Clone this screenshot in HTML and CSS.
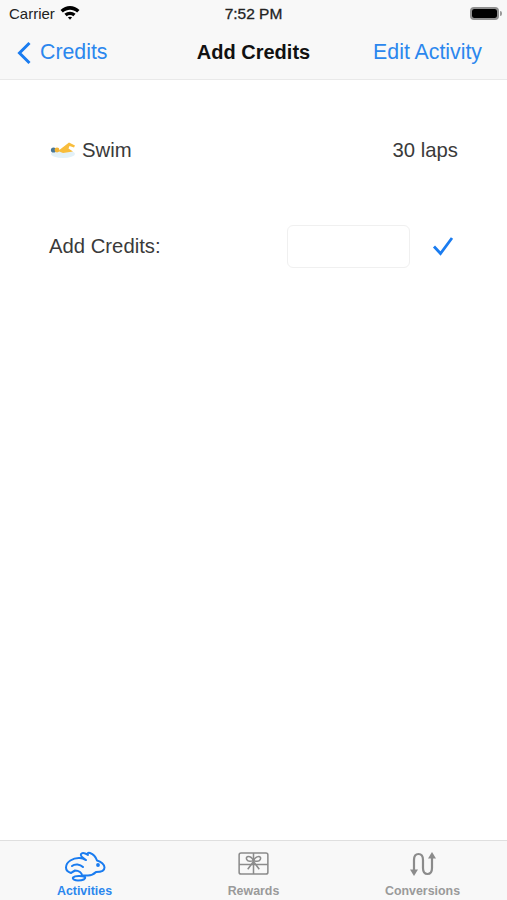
FILE: index.html
```html
<!DOCTYPE html>
<html>
<head>
<meta charset="utf-8" />
<title>Add Credits</title>
<link rel="stylesheet" href="styles.css">
</head>
<body>
<div class="app">
	<div class="top">
		<div class="status">
			<div class="status-left">
				<span>Carrier</span>
				<svg class="wifi" width="20" height="15" viewBox="0 0 19 14">
					<path d="M.5 4.600C6 -.4 13 -.4 18.500 4.600L16.300 7C12 3.400 7 3.400 2.700 7Z" fill="#000"/>
					<path d="M4.200 8.300C7.400 5.700 11.600 5.700 14.800 8.300L12.700 10.500C10.800 9 8.200 9 6.300 10.500Z" fill="#000"/>
					<path d="M7.500 11.600C8.700 10.700 10.300 10.700 11.500 11.600L9.500 13.900Z" fill="#000"/>
				</svg>
			</div>
			<span class="clock">7:52 PM</span>
			<div class="battery"><i></i></div>
		</div>
		<div class="nav">
			<a class="back" href="javascript:;">
				<svg width="16" height="24" viewBox="0 0 16 24"><path d="M13.500 2 3.500 12l10 10" fill="none" stroke="#1a7cf0" stroke-width="3"/></svg>
				Credits
			</a>
			<h1>Add Credits</h1>
			<a class="edit" href="javascript:;">Edit Activity</a>
		</div>
	</div>
	<div class="content">
		<div class="row row-swim">
			<div class="swim">
				<svg width="28" height="20" viewBox="0 0 28 20">
					<ellipse cx="14" cy="14" rx="12" ry="4" fill="#e3f1f8"/>
					<path d="M9 11 15.500 6 20 2.500 26 5.500 25 7.500 20.500 6 19.500 8.500 24 11.500 14 13Z" fill="#f8bd3c"/>
					<circle cx="4.500" cy="10" r="2.600" fill="#4a7796"/>
					<circle cx="8" cy="10" r="2.400" fill="#f4b636"/>
				</svg>
				<span>Swim</span>
			</div>
			<span>30 laps</span>
		</div>
		<div class="row row-add">
			<label>Add Credits:</label>
			<div class="entry">
				<div class="field"></div>
				<svg width="22" height="20" viewBox="0 0 22 20"><path d="M2 10.500 8.500 17.500 20 2" fill="none" stroke="#1a7cf0" stroke-width="2.800"/></svg>
			</div>
		</div>
	</div>
	<div class="tabs">
		<a class="tab on" href="javascript:;">
			<svg class="ico-rabbit" width="44" height="32" viewBox="0 0 44 32" fill="none" stroke="#1a7cf0" stroke-width="2" stroke-linejoin="round" stroke-linecap="round">
				<path d="M3 17.500C3 12 10 7.500 17 8C19 8.200 21 9 23 10C20 8 17 5.500 18 4C19 2.500 22 3 25 5C23.500 3.500 25 2.500 27 3C30 4 33 7.500 34 10.500C38 11.500 41.500 14.500 41.500 17.500C41.500 20.500 38 22 33 22C31 24 28 25.500 25 25.500L19 25.500C19 23 16 20.500 12 20.500C10 21.500 9 22.500 8 23C5 22 3 20 3 17.500Z"/>
				<path d="M10 27.500C12 25.500 19 25.500 22 27C23 29 20 30.500 15 30.500C12 30.500 9 29 10 27.500Z"/>
				<path d="M9 16C12 13.500 17 14 20 17"/>
				<circle cx="35" cy="15" r=".9" fill="#1a7cf0"/>
			</svg>
			<span>Activities</span>
		</a>
		<a class="tab" href="javascript:;">
			<svg class="ico-gift" width="31" height="23" viewBox="0 0 32 24" fill="none" stroke="#8b8b8b" stroke-width="1.600">
				<rect x="1" y="1" width="30" height="22" rx="2"/>
				<path d="M1 13H31M16 1V23"/>
				<path d="M16 9C13 3 7 4 9 8C10 10 13 10 16 9C19 10 22 10 23 8C25 4 19 3 16 9Z"/>
				<path d="M16 10 10 18M16 10 22 18"/>
			</svg>
			<span>Rewards</span>
		</a>
		<a class="tab" href="javascript:;">
			<svg class="ico-swap" width="28" height="26" viewBox="0 0 28 26" fill="none" stroke="#8b8b8b" stroke-width="2.200">
				<path d="M5 20V9C5 5 7 3 9.500 3S14 5 14 9V17C14 21 16 23 18.500 23S23 21 23 17V5"/>
				<path d="M1 18.500H9L5 25Z" fill="#8b8b8b" stroke="none"/>
				<path d="M19 7.500H27L23 1Z" fill="#8b8b8b" stroke="none"/>
			</svg>
			<span>Conversions</span>
		</a>
	</div>
</div>
</body>
</html>
```

FILE: styles.css
```css
*{ margin:0; padding:0; box-sizing:border-box; text-decoration:none;}
body{ background:#fff; font-family:"Liberation Sans", Arial, sans-serif; color:#3a3a3a;}
.app{ width:507px; height:900px; display:flex; flex-direction:column; overflow:hidden;}

.top{ height:80px; background:#f8f8f8; border-bottom:1px solid #e9e9e9;}
.status{ height:28px; padding:0 9px; display:flex; align-items:center; justify-content:space-between; position:relative; font-size:15px; color:#222;}
.status-left{ display:flex; align-items:center; gap:5px; margin-top:-1px;}
.wifi{ margin-top:-3px;}
.clock{ position:absolute; left:0; right:0; text-align:center; font-size:15.500px; -webkit-text-stroke:.3px #222;}
.battery{ width:29px; height:13px; margin-right:-1px; border:2px solid #8f8f8f; border-radius:4px; position:relative; margin-top:-1px;}
.battery i{ display:block; height:100%; background:#000; border-radius:2px;}
.battery:after{ content:""; position:absolute; right:-5px; top:2px; width:2px; height:5px; background:#999; border-radius:0 2px 2px 0;}

.nav{ height:49px; padding:0 25px 0 16px; display:flex; align-items:center; justify-content:space-between; position:relative; font-size:21.300px;}
.nav a{ color:#2b87ee;}
.back{ display:flex; align-items:center; gap:8px;}
.nav h1{ position:absolute; left:0; right:0; text-align:center; font-size:20px; font-weight:bold; color:#111; pointer-events:none;}

.content{ flex:1; padding:0 49px; font-size:20.300px;}
.row{ display:flex; align-items:center; justify-content:space-between;}
.row-swim{ height:40px; margin-top:50px;}
.row-add{ height:44px; margin-top:54px;}
.swim{ display:flex; align-items:center; gap:5px;}
.entry{ display:flex; align-items:center; gap:22px; margin-right:4px;}
.field{ width:123px; height:43px; border:1px solid #f0f0f0; border-radius:6px;}

.tabs{ height:60px; background:#f8f8f8; border-top:1px solid #dfdfdf; display:flex;}
.tab{ flex:1; display:flex; flex-direction:column; align-items:center; justify-content:flex-end; padding-bottom:2px; font-size:12.400px; font-weight:bold; color:#9a9a9a;}
.tab.on{ color:#2b87ee;}
.ico-rabbit{ margin-bottom:2px;}
.ico-gift{ margin-bottom:9px;}
.ico-swap{ margin-bottom:7px;}
```
